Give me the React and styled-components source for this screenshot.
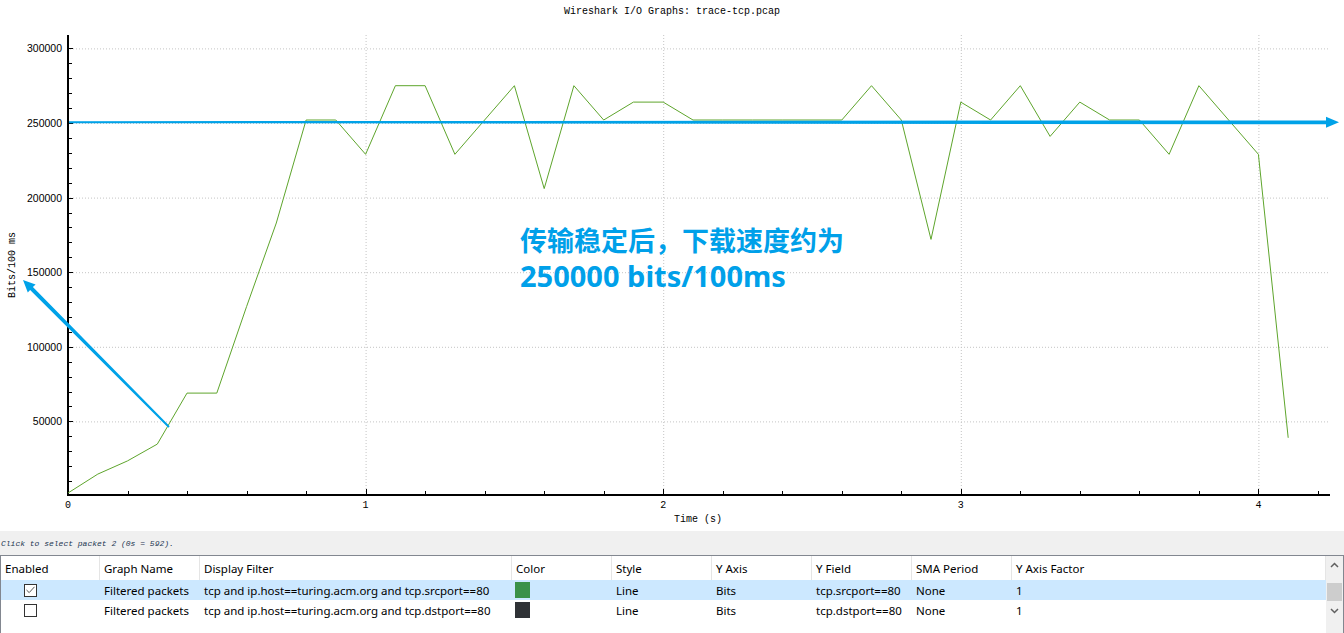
import React from 'react'
import styled, { createGlobalStyle } from 'styled-components'

const GlobalStyle = createGlobalStyle`
  html, body {
    margin: 0;
    padding: 0;
    background: #ffffff;
    overflow: hidden;
  }
  body {
    font-family: "Noto Sans", "Liberation Sans", sans-serif;
  }
`

// plot geometry (px)
const X0 = 68
const PX_PER_SEC = 297.6
const Y0 = 496
const PX_PER_UNIT = 74.6 / 50000
const X = t => X0 + t * PX_PER_SEC
const Y = v => Y0 - v * PX_PER_UNIT

// bits per 100ms, one sample every 0.1s
const SAMPLES = [
  2000, 14700, 23500, 34800, 69000, 69000, 127000, 183000, 252000, 252000,
  229000, 275000, 275000, 229000, 252000, 275000, 206000, 275000, 252000, 264000,
  264000, 252000, 252000, 252000, 252000, 252000, 252000, 275000, 252000, 172000,
  264000, 252000, 275000, 241000, 264000, 252000, 252000, 229000, 275000, 252000,
  229000, 39000,
]

const Window = styled.div`
  width: 1344px;
  height: 633px;
  display: flex;
  flex-direction: column;
  background: #ffffff;
  overflow: hidden;
`
const ChartPanel = styled.div`
  position: relative;
  height: 531px;
  flex: none;
`
const ChartSvg = styled.svg`
  display: block;
`
const MonoText = styled.text`
  font-family: "Liberation Mono", "DejaVu Sans Mono", monospace;
  font-size: 10px;
  fill: #000;
`
const ValueText = styled.text`
  font-family: "Liberation Sans", Arial, sans-serif;
  font-size: 10.5px;
  fill: #000;
`
const GridLine = styled.line`
  stroke: #c4c4c4;
  stroke-width: 1;
  stroke-dasharray: 1 2;
`
const AxisLine = styled.line`
  stroke: #000;
  stroke-width: 2;
`
const Tick = styled.line`
  stroke: #000;
  stroke-width: 1;
`
const DataLine = styled.polyline`
  fill: none;
  stroke: #5ea52c;
  stroke-width: 1;
`
const Arrow = styled.polygon`
  fill: #00a2e8;
`
const Annotation = styled.div`
  position: absolute;
  left: 520px;
  top: 222px;
  color: #00a0e9;
  font-weight: 700;
  white-space: nowrap;
`
const AnnotationLine = styled.div`
  font-family: ${p => (p.$latin ? '"Noto Sans", "Open Sans", sans-serif' : '"Noto Sans CJK SC", sans-serif')};
  font-size: ${p => (p.$latin ? '29px' : '27px')};
  line-height: 36px;
`
const StatusBar = styled.div`
  height: 24px;
  flex: none;
  display: flex;
  align-items: center;
  padding-left: 1px;
  background: #f0f0f0;
  color: #1d3650;
  font-family: "Liberation Mono", "DejaVu Sans Mono", monospace;
  font-style: italic;
  font-size: 8px;
`
const TableFrame = styled.div`
  flex: 1;
  display: flex;
  border: 1px solid #828790;
  border-bottom: none;
  background: #ffffff;
  min-height: 0;
`
const TableBody = styled.div`
  flex: 1;
  display: flex;
  flex-direction: column;
`
const GridRow = styled.div`
  display: grid;
  grid-template-columns: 99px 100px 312px 100px 100px 100px 100px 100px 1fr;
  height: ${p => (p.$header ? '24px' : '20px')};
  background: ${p => (p.$selected ? '#cce8ff' : '#ffffff')};
  font-size: 11.5px;
  color: #000;
`
const Cell = styled.div`
  display: flex;
  align-items: center;
  padding-left: ${p => (p.$pad ? p.$pad : 4)}px;
  border-right: ${p => (p.$header ? '1px solid #e5e5e5' : 'none')};
  white-space: nowrap;
  overflow: hidden;
`
const CheckBox = styled.span`
  width: 11px;
  height: 11px;
  border: 1px solid #333333;
  background: #ffffff;
  display: flex;
  align-items: center;
  justify-content: center;
`
const Swatch = styled.span`
  width: 15px;
  height: 16px;
  background: ${p => p.$color};
`
const ScrollBar = styled.div`
  width: 17px;
  flex: none;
  display: flex;
  flex-direction: column;
  align-items: center;
  background: #f0f0f0;
`
const ScrollButton = styled.div`
  height: 17px;
  width: 17px;
  display: flex;
  align-items: center;
  justify-content: center;
`
const ScrollThumb = styled.div`
  width: 15px;
  height: 18px;
  margin-top: 10px;
  margin-bottom: 1px;
  background: #cdcdcd;
`

const Chart = () => {
  const points = SAMPLES.map((v, i) => `${X(i / 10).toFixed(1)},${Y(v).toFixed(1)}`).join(' ')
  const yMajor = [50000, 100000, 150000, 200000, 250000, 300000]
  const yMinor = []
  for (let v = 10000; v <= 300000; v += 10000) yMinor.push(v)
  const xMajor = [0, 1, 2, 3, 4]
  const xMinor = []
  for (let i = 1; i <= 21; i++) xMinor.push(i / 5)

  return (
    <ChartSvg width="1344" height="531" viewBox="0 0 1344 531">
      <MonoText x="672" y="14" textAnchor="middle">Wireshark I/O Graphs: trace-tcp.pcap</MonoText>

      {yMajor.map(v => (
        <GridLine key={'gy' + v} x1="70" x2="1330" y1={Y(v) + 0.5} y2={Y(v) + 0.5} />
      ))}
      {xMajor.slice(1).map(t => (
        <GridLine key={'gx' + t} x1={X(t) + 0.5} x2={X(t) + 0.5} y1="35" y2="494" />
      ))}

      {yMinor.map(v => (
        <Tick key={'ty' + v} x1="69" x2={v % 50000 === 0 ? 73 : 72} y1={Math.round(Y(v)) + 0.5} y2={Math.round(Y(v)) + 0.5} />
      ))}
      {xMinor.map(t => (
        <Tick key={'tx' + t} x1={Math.round(X(t)) + 0.5} x2={Math.round(X(t)) + 0.5} y1="494" y2={Number.isInteger(t) ? 489 : 491} />
      ))}

      <AxisLine x1="68" x2="68" y1="35" y2="496" />
      <AxisLine x1="67" x2="1330" y1="495" y2="495" />

      {yMajor.map(v => (
        <ValueText key={'ly' + v} x="62" y={Y(v) + 4} textAnchor="end">{v}</ValueText>
      ))}
      {xMajor.map(t => (
        <MonoText key={'lx' + t} x={X(t)} y="508" textAnchor="middle">{t}</MonoText>
      ))}
      <MonoText x="698" y="522" textAnchor="middle">Time (s)</MonoText>
      <MonoText x="0" y="0" textAnchor="middle" transform="translate(15 265) rotate(-90)">Bits/100 ms</MonoText>

      <DataLine points={points} />

      <Arrow points="69,121.2 1326,120.4 1326,116.8 1339,122.3 1326,127.8 1326,124.2 69,123.2" />
      <Arrow points="169.7,426.3 32.9,287.1 35.6,284.4 23,280 27.8,292.6 30.1,289.9 168.3,427.7" />
    </ChartSvg>
  )
}

const columns = ['Enabled', 'Graph Name', 'Display Filter', 'Color', 'Style', 'Y Axis', 'Y Field', 'SMA Period', 'Y Axis Factor']

const graphs = [
  { enabled: true, name: 'Filtered packets', filter: 'tcp and ip.host==turing.acm.org and tcp.srcport==80', color: '#3a9148', style: 'Line', axis: 'Bits', field: 'tcp.srcport==80', sma: 'None', factor: '1' },
  { enabled: false, name: 'Filtered packets', filter: 'tcp and ip.host==turing.acm.org and tcp.dstport==80', color: '#2f3236', style: 'Line', axis: 'Bits', field: 'tcp.dstport==80', sma: 'None', factor: '1' },
]

const Chevron = ({ down }) => (
  <svg width="9" height="6" viewBox="0 0 9 6">
    <polyline points={down ? '1,1 4.5,4.5 8,1' : '1,5 4.5,1.5 8,5'} fill="none" stroke="#606060" strokeWidth="1.5" />
  </svg>
)

const GraphTable = () => (
  <TableFrame>
    <TableBody>
      <GridRow $header>
        {columns.map(c => (
          <Cell key={c} $header>{c}</Cell>
        ))}
      </GridRow>
      {graphs.map((g, i) => (
        <GridRow key={i} $selected={i === 0}>
          <Cell $pad={23}>
            <CheckBox>
              {g.enabled && (
                <svg width="9" height="8" viewBox="0 0 9 8">
                  <polyline points="0.5,4 3.2,6.6 8.5,0.8" fill="none" stroke="#555" strokeWidth="1" />
                </svg>
              )}
            </CheckBox>
          </Cell>
          <Cell>{g.name}</Cell>
          <Cell>{g.filter}</Cell>
          <Cell $pad={3}><Swatch $color={g.color} /></Cell>
          <Cell>{g.style}</Cell>
          <Cell>{g.axis}</Cell>
          <Cell>{g.field}</Cell>
          <Cell>{g.sma}</Cell>
          <Cell>{g.factor}</Cell>
        </GridRow>
      ))}
    </TableBody>
    <ScrollBar>
      <ScrollButton><Chevron /></ScrollButton>
      <ScrollThumb />
      <ScrollButton><Chevron down /></ScrollButton>
    </ScrollBar>
  </TableFrame>
)

const App = () => (
  <Window>
    <GlobalStyle />
    <ChartPanel>
      <Chart />
      <Annotation>
        <AnnotationLine>传输稳定后，下载速度约为</AnnotationLine>
        <AnnotationLine $latin>250000 bits/100ms</AnnotationLine>
      </Annotation>
    </ChartPanel>
    <StatusBar>Click to select packet 2 (0s = 592).</StatusBar>
    <GraphTable />
  </Window>
)

export default App
